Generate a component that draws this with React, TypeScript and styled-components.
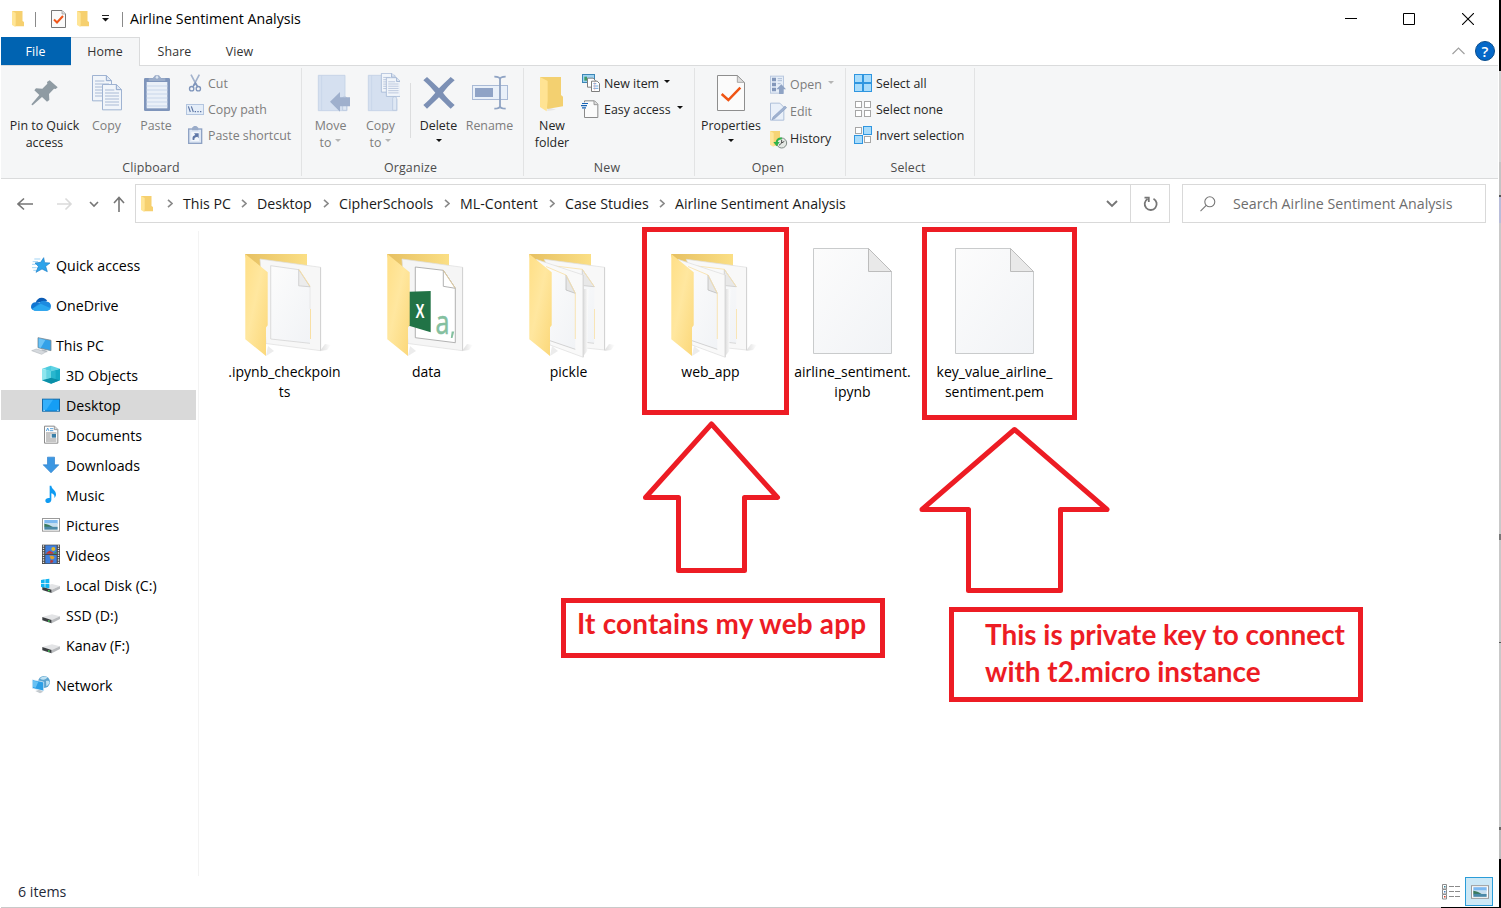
import React from "react";
import styled, { createGlobalStyle, css } from "styled-components";

const RED = "#ed1c24";
const LINE = "#dadbdc";

const GlobalStyle = createGlobalStyle`
  * { box-sizing: border-box; }
  body {
    margin: 0;
    overflow: hidden;
    background: #fff;
    font-family: "Open Sans", "Noto Sans", sans-serif;
    font-size: 14.2px;
    color: #000;
  }
  svg { display: block; flex: none; }
`;

/* ---------- shell ---------- */

const Desktop = styled.div`
  position: relative;
  display: flex;
  width: 1501px;
  height: 908px;
  overflow: hidden;
`;

const Explorer = styled.main`
  display: flex;
  flex-direction: column;
  width: 1499px;
  border-left: 1px solid #fff;
  background: #fff;
`;

const DesktopEdge = styled.div`
  width: 2px;
  background: linear-gradient(
    #000 0 71px, #d2d2d2 71px 162px, #c4c4c4 162px 195px, #555 195px 197px,
    #b9bdd9 197px 223px, #c9c9c9 223px 534px, #777 534px 540px, #c9c9c9 540px 642px,
    #555 642px 643px, #c9c9c9 643px 827px, #666 827px 830px, #bdbdbd 830px 859px, #000 859px
  );
`;

/* ---------- title bar ---------- */

const TitleBar = styled.header`
  display: flex;
  align-items: center;
  height: 37px;
  padding-left: 11px;
`;

const TitleDivider = styled.span<{ $left: number; $right: number }>`
  width: 1px;
  height: 15px;
  margin: 1px ${(p) => p.$right}px 0 ${(p) => p.$left}px;
  background: #8a8a8a;
`;

const Title = styled.h1`
  flex: 1;
  margin: 0;
  font-size: 14.2px;
  font-weight: 400;
  white-space: nowrap;
`;

const CaptionButton = styled.button`
  display: grid;
  place-items: center;
  width: 58.5px;
  height: 36px;
  padding: 0;
  border: 0;
  background: none;
`;

const Captions = styled.div`
  display: flex;
  padding-right: 2px;
`;

const QuickIcon = styled.span<{ $gap: number }>`
  display: flex;
  margin-right: ${(p) => p.$gap}px;
`;

/* ---------- tabs ---------- */

const TabRow = styled.nav`
  display: flex;
  height: 29px;
  margin-right: 1px;
  border-bottom: 1px solid ${LINE};
  font-size: 12.4px;
`;

const Tab = styled.button<{ $kind?: "file" | "active"; $width: number }>`
  width: ${(p) => p.$width}px;
  height: 28px;
  padding: 0;
  border: 0;
  background: none;
  font: inherit;
  letter-spacing: 0.1px;
  color: #333;
  ${(p) =>
    p.$kind === "file" &&
    css`
      padding-right: 1px;
      background: #0063b1;
      color: #fff;
    `}
  ${(p) =>
    p.$kind === "active" &&
    css`
      height: 29px;
      padding-bottom: 1px;
      border: 1px solid ${LINE};
      border-bottom: 0;
      border-left: 0;
      background: #f5f6f7;
    `}
`;

const TabTools = styled.div`
  display: flex;
  align-items: center;
  gap: 10px;
  margin-left: auto;
  padding-right: 3px;
`;

const HelpBadge = styled.span`
  display: grid;
  place-items: center;
  width: 20px;
  height: 20px;
  border: 1px solid #0a4d8c;
  border-radius: 50%;
  background: #0568c8;
  color: #fff;
  font-size: 15px;
  font-weight: 600;
  line-height: 18px;
`;

/* ---------- ribbon ---------- */

const RibbonBar = styled.section`
  display: flex;
  height: 113px;
  margin-right: 1px;
  border-bottom: 1px solid ${LINE};
  background: #f5f6f7;
  font-size: 12.4px;
  color: #2b2b2b;
`;

const Group = styled.div<{ $width: number }>`
  display: flex;
  flex-direction: column;
  width: ${(p) => p.$width}px;
  height: 108px;
  margin-top: 2px;
  border-right: 1px solid #e2e3e4;
`;

const GroupBody = styled.div`
  display: flex;
  height: 91px;
`;

const GroupLabel = styled.div<{ $shift?: number }>`
  padding-right: ${(p) => p.$shift ?? 0}px;
  line-height: 17px;
  text-align: center;
  letter-spacing: 0.15px;
  color: #4c4c4c;
`;

const BigIconBox = styled.span`
  height: 44px;
`;

/* An odd width leaves the 40px icon on a half pixel, so it is pulled back onto the grid. */
const BigButton = styled.button<{ $width: number; $dim?: boolean }>`
  display: flex;
  flex-direction: column;
  align-items: center;
  width: ${(p) => p.$width}px;
  padding: 5px 0 0;
  border: 0;
  background: none;
  font: inherit;
  line-height: 17px;
  white-space: nowrap;
  color: ${(p) => (p.$dim ? "#7d7d7d" : "#262626")};
  ${BigIconBox} {
    margin-left: ${(p) => (p.$width % 2 ? -1 : 0)}px;
  }
`;

const BigLine = styled.span`
  display: flex;
  align-items: center;
  justify-content: center;
  gap: 4px;
  min-height: 17px;
`;

const SmallColumn = styled.div<{ $left: number }>`
  display: grid;
  grid-auto-rows: 26px;
  align-content: start;
  margin-left: ${(p) => p.$left}px;
  padding-top: 2px;
  svg { margin-top: 2px; }
`;

const LooseColumn = styled.div`
  display: grid;
  grid-auto-rows: 27px;
  align-content: start;
  padding: 3px 0 0 3px;
`;

const SmallButton = styled.button<{ $gap: number; $dim?: boolean }>`
  display: flex;
  align-items: center;
  gap: ${(p) => p.$gap}px;
  padding: 0;
  border: 0;
  background: none;
  font: inherit;
  white-space: nowrap;
  color: ${(p) => (p.$dim ? "#7d7d7d" : "#262626")};
`;

const Caret = styled.i<{ $dim?: boolean; $gap?: number }>`
  width: 0;
  margin: 0 0 4px ${(p) => p.$gap ?? 0}px;
  border: 3px solid transparent;
  border-top-color: ${(p) => (p.$dim ? "#b5b5b5" : "#111")};
  border-bottom: 0;
`;

const InnerDivider = styled.span`
  width: 1px;
  height: 55px;
  margin: 15px 0 0 8px;
  background: #dcddde;
`;

/* ---------- address row ---------- */

const AddressRow = styled.div`
  display: flex;
  height: 52px;
  padding: 5px 0 0 16px;
`;

const HistoryButtons = styled.div`
  display: flex;
  align-items: center;
  width: 118px;
  height: 39px;
`;

const AddressBox = styled.div`
  display: flex;
  align-items: center;
  width: 1035px;
  height: 39px;
  padding-left: 5px;
  border: 1px solid #d9d9d9;
`;

const Crumbs = styled.div`
  display: flex;
  align-items: center;
  flex: 1;
  margin-left: 14px;
`;

const CrumbSep = styled.span`
  display: flex;
  margin-right: 10px;
`;

const Crumb = styled.span<{ $width: number }>`
  width: ${(p) => p.$width}px;
  white-space: nowrap;
  color: #1a1a1a;
`;

const RefreshCell = styled.button`
  display: grid;
  place-items: center;
  width: 39px;
  height: 37px;
  margin-left: 12px;
  padding: 0 0 0 2px;
  border: 0;
  border-left: 1px solid #d9d9d9;
  background: none;
`;

const SearchBox = styled.div`
  display: flex;
  align-items: center;
  gap: 17px;
  width: 304px;
  height: 39px;
  margin-left: 12px;
  padding-left: 17px;
  border: 1px solid #d9d9d9;
  color: #6d6d6d;
`;

/* ---------- body ---------- */

const Body = styled.div`
  display: flex;
  height: 645px;
`;

const Sidebar = styled.aside`
  width: 198px;
  padding: 19px 2px 0 0;
  border-right: 1px solid #f3f3f3;
`;

const TreeItem = styled.div<{ $level: 0 | 1; $selected?: boolean; $gap?: boolean }>`
  display: flex;
  align-items: center;
  gap: 4px;
  height: 30px;
  margin-top: ${(p) => (p.$gap ? 10 : 0)}px;
  padding-left: ${(p) => (p.$level ? 39 : 29)}px;
  background: ${(p) => (p.$selected ? "#d9d9d9" : "transparent")};
  white-space: nowrap;
`;

const FileGrid = styled.section`
  display: flex;
  padding: 16px 0 0 15px;
`;

const FileCell = styled.figure`
  display: flex;
  flex-direction: column;
  align-items: center;
  width: 142px;
  margin: 0;
`;

const FileName = styled.figcaption`
  margin: 3px 1px 0 0;
  font-size: 14px;
  line-height: 20px;
  text-align: center;
  white-space: pre;
`;

const StatusBar = styled.footer`
  display: flex;
  align-items: center;
  height: 32px;
  padding: 0 6px 2px 17px;
  background: linear-gradient(90deg, #c9c9c9 1440px, #000 1440px) bottom / 100% 1px no-repeat;
`;

const StatusText = styled.span`
  flex: 1;
  color: #1f2a38;
`;

const ViewToggle = styled.button<{ $on?: boolean }>`
  display: grid;
  place-items: center;
  width: 28px;
  height: 29px;
  margin-top: 1px;
  padding: 0 0 0 ${(p) => (p.$on ? 1 : 0)}px;
  border: 1px solid ${(p) => (p.$on ? "#2a9cd8" : "transparent")};
  background: ${(p) => (p.$on ? "#cce8f6" : "none")};
`;

/* ---------- mark-up over the window ---------- */

const Outline = styled.div<{ $x: number; $y: number; $w: number; $h: number }>`
  position: absolute;
  left: ${(p) => p.$x}px;
  top: ${(p) => p.$y}px;
  width: ${(p) => p.$w}px;
  height: ${(p) => p.$h}px;
  border: 5px solid ${RED};
`;

const Note = styled(Outline)<{ $padX: number; $padY: number; $track?: number }>`
  padding: ${(p) => p.$padY}px 0 0 ${(p) => p.$padX}px;
  background: #fff;
  color: ${RED};
  font: 700 27.9px/37px Lato, "Open Sans", sans-serif;
  letter-spacing: ${(p) => p.$track ?? 0}px;
  white-space: pre;
`;

const ArrowLayer = styled.svg`
  position: absolute;
  left: 0;
  top: 0;
  pointer-events: none;
`;

/* ---------- icons ---------- */

type IconProps = { box: string; w: number; h?: number; children: React.ReactNode };
const Icon = ({ box, w, h = w, children }: IconProps) => (
  <svg width={w} height={h} viewBox={box}>
    {children}
  </svg>
);

const SmallFolder = () => (
  <Icon box="0 0 12 16" w={12} h={16}>
    <path d="M0 0h10.5v10l1.5 1v4.2H3z" fill="#f6d06f" />
    <path d="M0 0l3.7 2v10.5L3.4 16 0 14z" fill="#ffe596" />
  </Icon>
);

const PropertiesMini = () => (
  <Icon box="0 0 15 18" w={15} h={18}>
    <path d="M.5.5h10.5l3.5 3.5v13.5H.5z" fill="#fafafa" stroke="#777" />
    <path d="M11 .5v3.5h3.5" fill="#ddd" stroke="#999" strokeWidth=".7" />
    <path d="M3 9.5l3 3L12 6" fill="none" stroke="#f0561a" strokeWidth="2" />
  </Icon>
);

const PinIcon = () => (
  <Icon box="72 219 120 120" w={40}>
    <path d="M149 241l24 21-6 5-5-1-15 16 1 18-7 5-15-14-28 25-3-1 0-3 23-27-15-14 5-6 19 1 15-15-1-5z" fill="#8f9ba3" />
  </Icon>
);

const CopyPage = ({ x, y, s = 1 }: { x: number; y: number; s?: number }) => (
  <g transform={`translate(${x} ${y}) scale(${s})`}>
    <path d="M1.5 1.5h42l15 15v61h-57z" fill="#f1f5fa" stroke="#9fb3d2" strokeWidth="3" />
    <path d="M43 2v15h15" fill="#dfe7f2" stroke="#8fa6ca" strokeWidth="3" />
    <path d="M9 18h28M9 27h42M9 36h42M9 45h42M9 54h42M9 63h42" stroke="#a9bad5" strokeWidth="3" />
  </g>
);

const CopyIcon = () => (
  <Icon box="258 219 120 120" w={40}>
    <CopyPage x={276} y={225} />
    <CopyPage x={306} y={252} />
  </Icon>
);

const PasteIcon = () => (
  <Icon box="408 219 120 120" w={40}>
    <rect x="432" y="234" width="78" height="99" rx="4" fill="#7f95bb" />
    <rect x="440" y="246" width="62" height="79" fill="#eaf0f8" />
    <path d="M440 258h62M440 270h62M440 282h62M440 294h62M440 306h62M440 318h62" stroke="#c8d6ea" strokeWidth="3" />
    <path d="M446 243v-8h12c3-4 5-6 7-9h12c2 3 4 5 7 9h12v8z" fill="#9aacc9" />
    <circle cx="471" cy="232" r="4" fill="#dce5f1" />
  </Icon>
);

const CutIcon = () => (
  <Icon box="558 222 60 60" w={20}>
    <path d="M573 224l17 32M598 224l-17 32" stroke="#a3b3cd" strokeWidth="5" />
    <circle cx="575" cy="266" r="6.5" fill="none" stroke="#7f95bb" strokeWidth="4" />
    <circle cx="595" cy="266" r="6.5" fill="none" stroke="#7f95bb" strokeWidth="4" />
    <path d="M579 260l7-11 7 11" fill="none" stroke="#7f95bb" strokeWidth="5" />
  </Icon>
);

const CopyPathIcon = () => (
  <Icon box="558 300 60 60" w={20}>
    <rect x="559.5" y="313.5" width="51" height="30" fill="#e4edf8" stroke="#b3c5df" strokeWidth="3" />
    <path d="M565 319l6 17M574 319l6 17" stroke="#5b74a3" strokeWidth="3.4" />
    <path d="M584 335h4M592 335h4M600 335h4" stroke="#5b74a3" strokeWidth="3.4" />
  </Icon>
);

const PasteShortcutIcon = () => (
  <Icon box="558 378 60 60" w={20}>
    <rect x="566" y="387" width="39" height="43" fill="#dfe8f5" stroke="#8ea2c4" strokeWidth="4" />
    <path d="M576 391v-8l6-5h7l6 5v8z" fill="#9aacc9" />
    <rect x="574" y="396" width="23" height="27" fill="#f3f7fc" />
    <path d="M578 420c-2-9 1-13 8-15l-4-5h14v15l-4-5c-7 1-9 4-9 10z" fill="#5f78a8" />
  </Icon>
);

const MoveFolder = ({ x }: { x: number }) => (
  <g transform={`translate(${x} 0)`}>
    <path d="M1 31h80v66l6 5v35H1z" fill="#d5e0f0" stroke="#c3d1e6" strokeWidth="2.5" />
    <path d="M11 32v104" stroke="#c6d4e8" strokeWidth="2.5" />
    <path d="M74 136V100q0-5 6-5t6 5v36z" fill="#dfe8f4" stroke="#b9c8df" strokeWidth="2.5" />
  </g>
);

const MoveIcon = () => (
  <Icon box="30 24 120 120" w={40}>
    <MoveFolder x={54} />
    <path d="M90 110l30-29v16h30v27h-30v16z" fill="#9fb0cd" />
  </Icon>
);

const CopyToIcon = () => (
  <Icon box="180 24 120 120" w={40}>
    <MoveFolder x={204} />
    <CopyPage x={243} y={24} s={0.74} />
    <CopyPage x={258} y={37} s={0.74} />
  </Icon>
);

const DeleteIcon = () => (
  <Icon box="354 24 120 120" w={40}>
    <path d="M370 46l11-10c13 12 25 23 36 34 11-11 22-22 35-34l12 10c-14 12-25 24-35 37 10 13 21 25 35 37l-12 11c-13-12-24-23-35-34-11 11-23 22-36 34l-11-11c14-12 26-25 36-37-11-13-22-25-36-37z" fill="#7c90b5" />
  </Icon>
);

const RenameIcon = () => (
  <Icon box="507 24 120 120" w={40}>
    <rect x="517.5" y="61.5" width="105" height="42" fill="#e9f0f9" stroke="#a9bad6" strokeWidth="3" />
    <rect x="525" y="69" width="54" height="27" fill="#8fa3c6" />
    <path d="M583 35c9 0 17 2 17 8v80c0 5-8 8-17 8M617 35c-9 0-17 2-17 8v80c0 5 8 8 17 8" fill="none" stroke="#90a4c4" strokeWidth="5.5" />
  </Icon>
);

const NewFolderIcon = () => (
  <Icon box="696 24 120 120" w={40}>
    <path d="M742 138l26-4-26-8z" fill="#e6e6e6" />
    <path d="M720 36h63v54l6 5v29l-47 8z" fill="#f3d070" />
    <path d="M720 36l23 12v58l-3 33-20-13z" fill="#ffe393" />
  </Icon>
);

const NewItemIcon = () => (
  <Icon box="843 24 66 66" w={22}>
    <rect x="847.5" y="28.5" width="36" height="24" fill="#9fd3f2" stroke="#3c86b5" strokeWidth="3" />
    <rect x="853" y="35" width="8" height="12" fill="#3f9a66" />
    <path d="M862.5 39.5h17l6 6v21h-23z" fill="#fff" stroke="#7e7e7e" strokeWidth="3" />
    <path d="M874.5 48.5h17l7 7v24h-24z" fill="#fff" stroke="#7e7e7e" strokeWidth="3" />
    <path d="M880 56h9M880 63h15M880 70h15" stroke="#6aa7e0" strokeWidth="3" />
    <path d="M884 52v24" stroke="#e89a9a" strokeWidth="1.5" />
  </Icon>
);

const EasyAccessIcon = () => (
  <Icon box="843 102 66 66" w={22}>
    <path d="M853.5 107.5h30l10 10v40h-40z" fill="#fbfbfb" stroke="#8a8a8a" strokeWidth="3" />
    <path d="M882 108v11h11" fill="#ddd" stroke="#8a8a8a" strokeWidth="2.5" />
    <rect x="845" y="112" width="14" height="19" fill="#f5f6f7" />
    <path d="M846 115.5h18M843 122h18M846 128.5h12" stroke="#1763b5" strokeWidth="3.3" />
  </Icon>
);

const PropertiesIcon = () => (
  <Icon box="63 24 120 120" w={40}>
    <path d="M82.5 31.5h60l21 21v84h-81z" fill="#fbfbfb" stroke="#8e8e8e" strokeWidth="3" />
    <path d="M142 32v20h21z" fill="#dedede" stroke="#9a9a9a" strokeWidth="2.5" />
    <path d="M95 87l20 18 36-37" fill="none" stroke="#ef5414" strokeWidth="7.5" />
  </Icon>
);

const OpenIcon = () => (
  <Icon box="240 28 60 60" w={20}>
    <rect x="241.5" y="31.5" width="39" height="51" fill="#e6eef8" stroke="#b9c8df" strokeWidth="3" />
    <path d="M246 36h12v11h-12zM246 51h12v11h-12zM246 66h12v11h-12z" fill="#8397ba" />
    <path d="M263 39h13M263 45h13M263 54h9" stroke="#aebdd6" strokeWidth="3" />
    <path d="M274 56l14 15h-8v14h-13V71h-8z" fill="#8fa3c4" />
  </Icon>
);

const EditIcon = () => (
  <Icon box="240 109 60 60" w={20}>
    <path d="M241.5 112.5h28l12 12v39h-40z" fill="#e9f0f9" stroke="#aebfd9" strokeWidth="3" />
    <path d="M285 121l5 5-36 33-8 3 3-8z" fill="#9fb2d0" stroke="#7f95bb" strokeWidth="1.5" />
  </Icon>
);

const HistoryIcon = () => (
  <Icon box="240 190 60 60" w={20}>
    <path d="M240 196h30v30l3 4v10h-24z" fill="#f6d475" />
    <path d="M240 196l11 6v42l-11-7z" fill="#ffe59a" />
    <circle cx="275" cy="232" r="15" fill="#e4e8e4" stroke="#7f8a85" strokeWidth="3" />
    <path d="M275 223v9l8-5M267 239l8-7" fill="none" stroke="#333" strokeWidth="2.5" />
    <path d="M276 216c-10-2-18 5-19 13h-7l10 13 9-13h-6c1-5 6-8 12-7z" fill="#2fb24a" />
  </Icon>
);

const Tile = ({ x, y, on }: { x: number; y: number; on?: boolean }) =>
  on ? (
    <rect x={x + 1.5} y={y + 1.5} width="24" height="24" fill="#a9dcfb" stroke="#2f96e0" strokeWidth="3" />
  ) : (
    <rect x={x + 4.5} y={y + 4.5} width="18" height="18" fill="#fff" stroke="#a6a6a6" strokeWidth="3" />
  );

const SelectIcon = ({ on }: { on: [boolean, boolean, boolean, boolean] }) => (
  <Icon box="0 0 60 60" w={20}>
    {on.map((v, i) => (v ? null : <Tile key={i} x={(i % 2) * 27} y={i > 1 ? 27 : 0} />))}
    {on.map((v, i) => (v ? <Tile key={i} x={(i % 2) * 27} y={i > 1 ? 27 : 0} on /> : null))}
  </Icon>
);

/* sidebar icons */

const StarIcon = () => (
  <Icon box="90 43 66 66" w={22}>
    <path d="M103 58h18M98 66h16M96 74h12M96 84h14M100 92h10" stroke="#8ecbf3" strokeWidth="2.5" />
    <path d="M131 54l3 15 16 1-13 10 5 16-16-8-18 10 7-18-10-10 17-2z" fill="#2ea3ea" stroke="#1b7fc8" strokeWidth="2" />
  </Icon>
);

const CloudIcon = () => (
  <Icon box="90 163 66 66" w={22}>
    <path d="M107 190c2-10 9-16 18-16 8 0 14 4 17 11z" fill="#0a5cb5" />
    <path d="M93 202c0-9 7-15 16-14 6 0 12 4 18 7l-22 17c-8 0-12-5-12-10z" fill="#1176d2" />
    <path d="M118 190c5-7 14-9 22-4 8 0 13 6 13 13 0 8-5 14-13 14h-33c-4 0-8-2-10-5z" fill="#1c8be0" />
    <path d="M97 207l25-15 30 14c-2 5-7 7-12 7h-33c-4 0-8-2-10-6z" fill="#2aa8f0" />
  </Icon>
);

const ComputerIcon = () => (
  <Icon box="90 283 66 66" w={22}>
    <path d="M114 294l39 8v31l-39-9z" fill="#33a1e8" stroke="#7f8b94" strokeWidth="2.5" />
    <path d="M116 296l20 5-14 24-6-2z" fill="#6cc3f5" />
    <path d="M124 328l18 5v5l-14-2z" fill="#b8bec4" />
    <path d="M95 333l14-5 30 8-14 8z" fill="#d5d9dd" stroke="#a9afb5" strokeWidth="1.5" />
  </Icon>
);

const CubeIcon = () => (
  <Icon box="120 373 66 66" w={22}>
    <path d="M126 387l27-9 27 9-27 8z" fill="#5fd3e4" />
    <path d="M126 387l27 8v37l-27-10z" fill="#8fe6ee" />
    <path d="M180 387l-27 8v37l27-10z" fill="#14a9c4" />
    <path d="M126 422l27-8 27 8-27 10z" fill="#0a8fa8" />
    <path d="M153 378l-14 5v34l14-3zM153 395v19l14 4v-27z" fill="#3cc3d8" opacity=".5" />
  </Icon>
);

const DesktopIcon = () => (
  <Icon box="120 463 66 66" w={22}>
    <rect x="127.5" y="478.5" width="51" height="36" fill="#159ef5" stroke="#146aa8" strokeWidth="3" />
    <path d="M129 480h30l-20 30h-10z" fill="#35b0fb" />
    <path d="M130 512h46" stroke="#cdeafc" strokeWidth="2.5" strokeDasharray="5 36" />
  </Icon>
);

const DocumentIcon = () => (
  <Icon box="120 553 66 66" w={22}>
    <path d="M133.5 559.5h30l10 10v41h-40z" fill="#fff" stroke="#8b8b8b" strokeWidth="3" />
    <path d="M163 560v10h10" fill="#ddd" stroke="#8b8b8b" strokeWidth="2.5" />
    <path d="M139 574l4-9 4 9M150 567h10M150 573h10" fill="none" stroke="#3a93d8" strokeWidth="2.5" />
    <path d="M138 580h31M138 586h14M138 592h14M138 598h31M138 604h31" stroke="#777" strokeWidth="2.5" />
    <rect x="155" y="583" width="13" height="11" fill="#3a7fa8" />
  </Icon>
);

const DownloadIcon = () => (
  <Icon box="120 643 66 66" w={22}>
    <path d="M142.5 652.5h21v23h13l-23.5 24-23.5-24h13z" fill="#3c97e2" stroke="#2a7fcb" strokeWidth="2" />
  </Icon>
);

const MusicIcon = () => (
  <Icon box="120 43 66 66" w={22}>
    <path d="M149 48h5c1 10 14 14 14 26 0 5-2 8-5 11 2-9-3-12-9-14v20c-1 12-18 11-18 2 0-6 6-9 13-8z" fill="#0f9bf2" />
  </Icon>
);

const Landscape = () => (
  <>
    <rect x="127.5" y="146.5" width="51" height="38" fill="#fff" stroke="#9a9a9a" strokeWidth="3" />
    <rect x="133" y="151" width="40" height="12" fill="#7db9f0" />
    <rect x="133" y="160" width="40" height="10" fill="#c5def0" />
    <path d="M133 162c9 1 20 6 27 11h-27z" fill="#3b7a5c" />
    <rect x="133" y="171" width="40" height="9" fill="#4b89a8" />
  </>
);

const PictureIcon = () => (
  <Icon box="120 133 66 66" w={22}>
    <Landscape />
  </Icon>
);

const VideoIcon = () => (
  <Icon box="120 223 66 66" w={22}>
    <rect x="126" y="225" width="54" height="58" fill="#4a4a4a" />
    <path d="M130.5 227v55M175.5 227v55" stroke="#e6e6e6" strokeWidth="4" strokeDasharray="4 3" />
    <rect x="136" y="227" width="34" height="26" fill="#3f7fdc" />
    <rect x="136" y="256" width="34" height="25" fill="#3f7fdc" />
    <circle cx="160" cy="238" r="6" fill="#e2b92b" />
    <path d="M139 250l9-7 9 4 5 5h-23z" fill="#c8372d" />
    <path d="M148 258h10l6 5-4 6h-7z" fill="#e0a12a" />
    <path d="M152 270l9 3-4 6h-7z" fill="#b73a34" />
    <path d="M161 250l8-4v6h-8z" fill="#3a9a43" />
  </Icon>
);

const DriveShape = ({ y }: { y: number }) => (
  <g transform={`translate(0 ${y})`}>
    <path d="M127 26l29-8 24 6-25 11z" fill="#e3e4e6" />
    <path d="M127 26l28 9v10l-28-9z" fill="#3c3f42" />
    <path d="M155 35l25-11v8l-25 13z" fill="#b9bbbe" />
    <rect x="144" y="36" width="5" height="4" fill="#42d85a" />
  </g>
);

const WindowsDriveIcon = () => (
  <Icon box="120 313 66 66" w={22}>
    <DriveShape y={325} />
    <path d="M123 331l11-2v12h-11zM136 329l12-2v14h-12zM123 343h11v11l-11-2zM136 343h12v13l-12-2z" fill="#12b4f2" />
  </Icon>
);

const DriveIcon = () => (
  <Icon box="120 403 66 66" w={22}>
    <DriveShape y={416} />
  </Icon>
);

const NetworkIcon = () => (
  <Icon box="90 613 66 66" w={22}>
    <circle cx="132" cy="637" r="18" fill="#5ba3cf" />
    <path d="M120 627c6-8 16-8 22-4-3 6-12 10-22 4zM138 634c6-2 10 0 11 4-2 7-6 10-10 12z" fill="#bfe2f3" />
    <path d="M97 630l34 7v27l-34-8z" fill="#2c9fe6" stroke="#e8f3fa" strokeWidth="2" />
    <path d="M99 633l16 3-8 18-8-2z" fill="#67c1f3" />
    <path d="M106 664l12-4 12 6-10 5z" fill="#c3c9ce" />
  </Icon>
);

/* large thumbnails, 106 x 112 */

const FlapAndBack = ({ children }: { children: React.ReactNode }) => (
  <Icon box="0 0 106 112" w={106} h={112}>
    <defs>
      <linearGradient id="back" x1="0" x2="1">
        <stop offset="0" stopColor="#e6c062" />
        <stop offset="1" stopColor="#fbdf85" />
      </linearGradient>
      <linearGradient id="flap" x1="0" y1="0" x2="1" y2="1">
        <stop offset="0" stopColor="#ffdf86" />
        <stop offset=".45" stopColor="#ffe79f" />
        <stop offset="1" stopColor="#fbd778" />
      </linearGradient>
      <linearGradient id="paper" x1="0" y1="0" x2="1" y2="1">
        <stop offset="0" stopColor="#fcfcfc" />
        <stop offset="1" stopColor="#f1f3f6" />
      </linearGradient>
      <linearGradient id="cast" x1="0" x2="1">
        <stop offset="0" stopColor="#dcdcdc" />
        <stop offset="1" stopColor="#fff" />
      </linearGradient>
    </defs>
    <path d="M88 104l5-7 6 1-4 5z" fill="url(#cast)" />
    <path d="M34 109l8-5-6-5z" fill="#ececec" />
    <path d="M13 7h62v30H20z" fill="url(#back)" />
    {children}
    <path d="M13.3 7l22.4 18.3v53L34 80.5V109L13.3 92.3z" fill="url(#flap)" />
  </Icon>
);

const SheetThumb = () => (
  <FlapAndBack>
    <path d="M28 12l60.7 8.3v83.4L34 96.500z" fill="#f7f7f7" stroke="#dedede" strokeWidth=".7" />
    <path d="M88.5 20.3v83.4" stroke="#d3d3d3" />
    <path d="M38.7 18.7L67 23l11 16.7v56.6L38.7 92z" fill="url(#paper)" />
    <path d="M67 22.7L38.7 18.7V92L78 96.3" fill="none" stroke="#d0d0d0" strokeWidth=".7" />
    <path d="M78 40v22" stroke="#e4e4e4" strokeWidth=".8" />
    <path d="M66.7 22.5v16.3l11.3 1z" fill="#ececec" stroke="#c9c9c9" strokeWidth=".8" />
    <path d="M67 22.5l11 16.7M78.5 62v30" stroke="#f8dfa4" />
  </FlapAndBack>
);

const CsvThumb = () => (
  <FlapAndBack>
    <path d="M28 12l60.7 8.3v83.4L34 96.5z" fill="#f5f5f5" stroke="#dedede" strokeWidth=".7" />
    <path d="M88.5 20.3v83.4" stroke="#d3d3d3" />
    <path d="M41.3 20l28 3.3 12 18v54.4l-40-5z" fill="#fff" stroke="#a9a9a9" strokeWidth=".9" />
    <path d="M69.3 23.3v16l12 2z" fill="#fff" stroke="#a9a9a9" strokeWidth=".9" />
    <path d="M69.3 23.3l12 18" stroke="#f3d595" strokeWidth=".7" />
    <path d="M35 44.7l21.7-.7v41.3L35 78.7z" fill="#217346" />
    <text x="41.5" y="70.5" fontFamily="Liberation Sans" fontWeight="700" fontSize="20" textLength="9" lengthAdjust="spacingAndGlyphs" fill="#fff">X</text>
    <text x="61.5" y="87.3" fontFamily="Open Sans" fontSize="33" textLength="14" lengthAdjust="spacingAndGlyphs" fill="#84c09f" stroke="#84c09f" strokeWidth=".6">a</text>
    <path d="M77.7 84.5h2.500l-1.700 6.500h-1.700z" fill="#84c09f" />
  </FlapAndBack>
);

const PagesThumb = () => (
  <FlapAndBack>
    <path d="M28.3 12.3l60.4 8V103L60 100z" fill="#f8f8f8" stroke="#dedede" strokeWidth=".7" />
    <path d="M88.5 20.3V103" stroke="#d3d3d3" />
    <path d="M39 19l27.3 3.3 12 17.4v56.6L60 94z" fill="url(#paper)" />
    <path d="M78 96.3L67 95" stroke="#cfcfcf" strokeWidth=".8" />
    <path d="M66.3 22.3v16.2l12 1.2z" fill="#e8e8e8" stroke="#c9c9c9" strokeWidth=".8" />
    <path d="M39 19l27.3 3.3 12 17.4M78.5 62v30" fill="none" stroke="#f8e2ae" strokeWidth=".9" />
    <path d="M67.3 42h5l-1 62-4 5z" fill="url(#cast)" />
    <path d="M20 12.3L67.3 28v82.3L34 98z" fill="#f9f9f9" stroke="#dcdcdc" strokeWidth=".7" />
    <path d="M67.2 28v82" stroke="#d6d6d6" />
    <path d="M27 18l23 10 9.3 18.3v56L34 93.7z" fill="url(#paper)" />
    <path d="M34 93.7l25.3 8.6" stroke="#c9c9c9" strokeWidth=".8" />
    <path d="M50 28v15l9.3 3.3z" fill="#e6e6e6" stroke="#bdbdbd" strokeWidth=".8" />
    <path d="M30 19.5L50 28l9.3 18.3V92" fill="none" stroke="#f8e2ae" strokeWidth=".9" />
  </FlapAndBack>
);

const BlankThumb = () => (
  <Icon box="0 0 106 112" w={106} h={112}>
    <path d="M13.5 1.5h55l23 23v82h-78z" fill="url(#paper)" stroke="#c9cbcc" />
    <path d="M68.5 1.5v23h23z" fill="#e9e9e9" stroke="#bcbcbc" />
  </Icon>
);

const Chevron = ({ d, w, h, color = "#767676", width = 1.6 }: { d: string; w: number; h: number; color?: string; width?: number }) => (
  <svg width={w} height={h} fill="none" stroke={color} strokeWidth={width}>
    <path d={d} />
  </svg>
);

/* ---------- data ---------- */

type TreeNode = { name: string; level: 0 | 1; icon: React.ReactNode; gap?: boolean; selected?: boolean };
const TREE: TreeNode[] = [
  { name: "Quick access", level: 0, icon: <StarIcon /> },
  { name: "OneDrive", level: 0, icon: <CloudIcon />, gap: true },
  { name: "This PC", level: 0, icon: <ComputerIcon />, gap: true },
  { name: "3D Objects", level: 1, icon: <CubeIcon /> },
  { name: "Desktop", level: 1, icon: <DesktopIcon />, selected: true },
  { name: "Documents", level: 1, icon: <DocumentIcon /> },
  { name: "Downloads", level: 1, icon: <DownloadIcon /> },
  { name: "Music", level: 1, icon: <MusicIcon /> },
  { name: "Pictures", level: 1, icon: <PictureIcon /> },
  { name: "Videos", level: 1, icon: <VideoIcon /> },
  { name: "Local Disk (C:)", level: 1, icon: <WindowsDriveIcon /> },
  { name: "SSD (D:)", level: 1, icon: <DriveIcon /> },
  { name: "Kanav (F:)", level: 1, icon: <DriveIcon /> },
  { name: "Network", level: 0, icon: <NetworkIcon />, gap: true },
];

const FILES = [
  { name: ".ipynb_checkpoin\nts", icon: <SheetThumb /> },
  { name: "data", icon: <CsvThumb /> },
  { name: "pickle", icon: <PagesThumb /> },
  { name: "web_app", icon: <PagesThumb /> },
  { name: "airline_sentiment.\nipynb", icon: <BlankThumb /> },
  { name: "key_value_airline_\nsentiment.pem", icon: <BlankThumb /> },
];

const CRUMBS: [string, number][] = [
  ["This PC", 58],
  ["Desktop", 66],
  ["CipherSchools", 105],
  ["ML-Content", 89],
  ["Case Studies", 94],
  ["Airline Sentiment Analysis", 175],
];

export default function App() {
  return (
    <Desktop>
      <GlobalStyle />
      <Explorer>
        <TitleBar>
          <QuickIcon $gap={11}><SmallFolder /></QuickIcon>
          <TitleDivider $left={0} $right={15} />
          <QuickIcon $gap={11}><PropertiesMini /></QuickIcon>
          <QuickIcon $gap={13}><SmallFolder /></QuickIcon>
          <svg width="7" height="7"><path d="M0 .5h7" stroke="#222" /><path d="M0 3h7l-3.5 3.5z" fill="#111" /></svg>
          <TitleDivider $left={13} $right={7} />
          <Title>Airline Sentiment Analysis</Title>
          <Captions>
            <CaptionButton><svg width="12" height="12"><path d="M0 5.5h12" stroke="#000" /></svg></CaptionButton>
            <CaptionButton><svg width="12" height="12"><path d="M.5.5h11v11H.5z" fill="none" stroke="#000" /></svg></CaptionButton>
            <CaptionButton><svg width="12" height="12"><path d="M0 0l12 12M12 0L0 12" stroke="#000" strokeWidth="1.1" /></svg></CaptionButton>
          </Captions>
        </TitleBar>

        <TabRow>
          <Tab $kind="file" $width={70}>File</Tab>
          <Tab $kind="active" $width={69}>Home</Tab>
          <Tab $width={69}>Share</Tab>
          <Tab $width={61}>View</Tab>
          <TabTools>
            <Chevron w={13} h={8} d="M.5 7l6-6 6 6" color="#a0a0a0" width={1.2} />
            <HelpBadge>?</HelpBadge>
          </TabTools>
        </TabRow>

        <RibbonBar>
          <Group $width={301}>
            <GroupBody>
              <BigButton $width={87}><BigIconBox><PinIcon /></BigIconBox><BigLine>Pin to Quick</BigLine><BigLine>access</BigLine></BigButton>
              <BigButton $width={37} $dim><BigIconBox><CopyIcon /></BigIconBox><BigLine>Copy</BigLine></BigButton>
              <BigButton $width={62} $dim><BigIconBox><PasteIcon /></BigIconBox><BigLine>Paste</BigLine></BigButton>
              <SmallColumn $left={-1}>
                <SmallButton $dim $gap={2}><CutIcon />Cut</SmallButton>
                <SmallButton $dim $gap={2}><CopyPathIcon />Copy path</SmallButton>
                <SmallButton $dim $gap={2}><PasteShortcutIcon />Paste shortcut</SmallButton>
              </SmallColumn>
            </GroupBody>
            <GroupLabel>Clipboard</GroupLabel>
          </Group>

          <Group $width={222}>
            <GroupBody>
              <BigButton $width={57} $dim><BigIconBox><MoveIcon /></BigIconBox><BigLine>Move</BigLine><BigLine>to <Caret $dim /></BigLine></BigButton>
              <BigButton $width={43} $dim><BigIconBox><CopyToIcon /></BigIconBox><BigLine>Copy</BigLine><BigLine>to <Caret $dim /></BigLine></BigButton>
              <InnerDivider />
              <BigButton $width={55}><BigIconBox><DeleteIcon /></BigIconBox><BigLine>Delete</BigLine><BigLine><Caret /></BigLine></BigButton>
              <BigButton $width={47} $dim><BigIconBox><RenameIcon /></BigIconBox><BigLine>Rename</BigLine></BigButton>
            </GroupBody>
            <GroupLabel $shift={4}>Organize</GroupLabel>
          </Group>

          <Group $width={171}>
            <GroupBody>
              <BigButton $width={56}><BigIconBox><NewFolderIcon /></BigIconBox><BigLine>New</BigLine><BigLine>folder</BigLine></BigButton>
              <SmallColumn $left={1}>
                <SmallButton $gap={1}><NewItemIcon />New item<Caret $gap={4} /></SmallButton>
                <SmallButton $gap={1}><EasyAccessIcon />Easy access<Caret $gap={5} /></SmallButton>
              </SmallColumn>
            </GroupBody>
            <GroupLabel $shift={4}>New</GroupLabel>
          </Group>

          <Group $width={151}>
            <GroupBody>
              <BigButton $width={72}><BigIconBox><PropertiesIcon /></BigIconBox><BigLine>Properties</BigLine><BigLine><Caret /></BigLine></BigButton>
              <LooseColumn>
                <SmallButton $dim $gap={0}><OpenIcon />Open<Caret $dim $gap={6} /></SmallButton>
                <SmallButton $dim $gap={0}><EditIcon />Edit</SmallButton>
                <SmallButton $gap={0}><HistoryIcon />History</SmallButton>
              </LooseColumn>
            </GroupBody>
            <GroupLabel $shift={4}>Open</GroupLabel>
          </Group>

          <Group $width={129}>
            <GroupBody>
              <SmallColumn $left={8}>
                <SmallButton $gap={2}><SelectIcon on={[true, true, true, true]} />Select all</SmallButton>
                <SmallButton $gap={2}><SelectIcon on={[false, false, false, false]} />Select none</SmallButton>
                <SmallButton $gap={2}><SelectIcon on={[false, true, true, false]} />Invert selection</SmallButton>
              </SmallColumn>
            </GroupBody>
            <GroupLabel $shift={4}>Select</GroupLabel>
          </Group>
        </RibbonBar>

        <AddressRow>
          <HistoryButtons>
            <Chevron w={40} h={14} d="M16 7H1M7 1.5L1 7l6 5.5" />
            <Chevron w={32} h={14} d="M0 7h14M8.5 1.5L14 7l-5.5 5.5" color="#dadada" />
            <Chevron w={24} h={14} d="M1 5l4 4 4-4" />
            <Chevron w={13} h={16} d="M6 16V1.5M1 7l5-5.5L11 7" />
          </HistoryButtons>
          <AddressBox>
            <SmallFolder />
            <Crumbs>
              {CRUMBS.map(([name, width]) => (
                <React.Fragment key={name}>
                  <CrumbSep><Chevron w={6} h={9} d="M1 .8l4 3.7-4 3.7" color="#8a8a8a" /></CrumbSep>
                  <Crumb $width={width}>{name}</Crumb>
                </React.Fragment>
              ))}
            </Crumbs>
            <Chevron w={12} h={8} d="M1 1l5 5 5-5" width={1.9} />
            <RefreshCell>
              <svg width="16" height="16" fill="none" stroke="#767676" strokeWidth="1.8">
                <path d="M10.5 2.7a6 6 0 1 1-6 .2M1.5 1.7h4.3v4.3" />
              </svg>
            </RefreshCell>
          </AddressBox>
          <SearchBox>
            <svg width="16" height="16" fill="none" stroke="#777" strokeWidth="1.1">
              <circle cx="9.8" cy="5.8" r="5" /><path d="M6.2 9.4L.5 15.2" />
            </svg>
            Search Airline Sentiment Analysis
          </SearchBox>
        </AddressRow>

        <Body>
          <Sidebar>
            {TREE.map((n) => (
              <TreeItem key={n.name} $level={n.level} $gap={n.gap} $selected={n.selected}>
                {n.icon}
                {n.name}
              </TreeItem>
            ))}
          </Sidebar>
          <FileGrid>
            {FILES.map((f) => (
              <FileCell key={f.name}>
                {f.icon}
                <FileName>{f.name}</FileName>
              </FileCell>
            ))}
          </FileGrid>
        </Body>

        <StatusBar>
          <StatusText>6 items</StatusText>
          <ViewToggle>
            <svg width="20" height="16" fill="none">
              <path d="M1.5.5h4v4.5h-4zM1.5 5.5h4v4.5h-4zM1.5 10.5h4v4.5h-4z" stroke="#8d8d8d" />
              <path d="M3 2h1.5v1.5H3z" fill="#3a7f92" /><path d="M3 7h1.5v1.5H3z" fill="#4f86c0" /><path d="M3 12h1.5v1.5H3z" fill="#d8402b" />
              <path d="M8 2.5h5M14 2.5h5M8 7.5h5M14 7.5h5M8 12.5h5M14 12.5h5" stroke="#8a8a8a" />
            </svg>
          </ViewToggle>
          <ViewToggle $on>
            <Icon box="126 145 54 41" w={18} h={14}><Landscape /></Icon>
          </ViewToggle>
        </StatusBar>
      </Explorer>
      <DesktopEdge />

      <Outline $x={642} $y={227} $w={147} $h={188} />
      <Outline $x={922} $y={227} $w={155} $h={193} />
      <Note $x={561} $y={598} $w={324} $h={60} $padX={11} $padY={2} $track={0.2}>It contains my web app</Note>
      <Note $x={949} $y={607} $w={414} $h={95} $padX={31} $padY={4}>{"This is private key to connect\nwith t2.micro instance"}</Note>
      <ArrowLayer width="1501" height="908" fill="none" stroke={RED} strokeWidth="5" strokeLinejoin="round">
        <path d="M711.5 424L777.5 497.5H744.5V570.5H678.5V497.5H645.5z" />
        <path d="M1014.5 429.5L1107 509.5H1060.5V590.5H968.5V509.5H922z" />
      </ArrowLayer>
    </Desktop>
  );
}
